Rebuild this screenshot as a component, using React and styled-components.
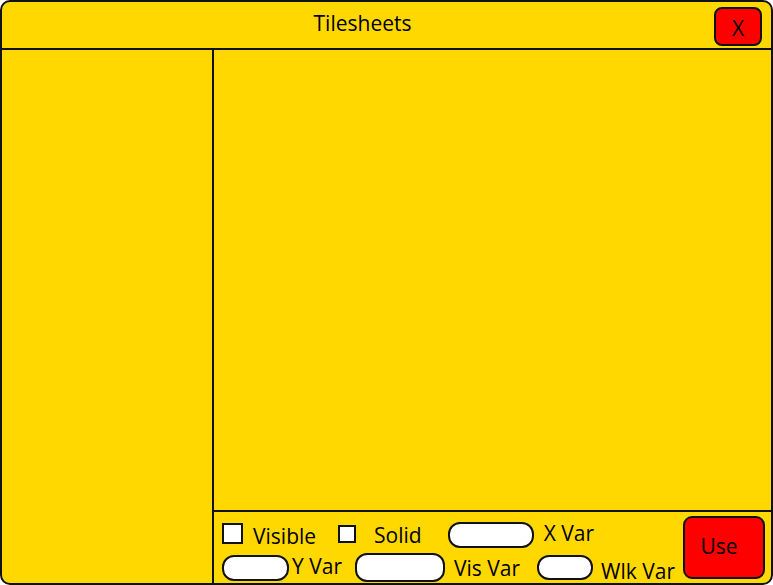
import React from "react";
import styled, { createGlobalStyle } from "styled-components";

const Global = createGlobalStyle`
  html, body { margin: 0; padding: 0; background: #ffffff; }
  * { box-sizing: border-box; }
  body { font-family: "Open Sans", "Noto Sans", sans-serif; }
`;

const Window = styled.div`
  width: 773px;
  height: 585px;
  background: #ffd800;
  border: 2px solid #111;
  border-radius: 10px;
  display: flex;
  flex-direction: column;
  overflow: hidden;
  color: #000;
`;

const Header = styled.div`
  height: 48px;
  flex: 0 0 48px;
  border-bottom: 2px solid #111;
  display: flex;
  align-items: center;
  justify-content: center;
  position: relative;
`;

const Title = styled.div`
  font-size: 21px;
  line-height: 1;
  margin-top: -4px;
  margin-right: 48px;
`;

const CloseButton = styled.button`
  position: absolute;
  right: 9px;
  top: 5px;
  width: 48px;
  height: 39px;
  background: #ff0000;
  border: 2px solid #111;
  border-radius: 8px;
  font-family: inherit;
  font-size: 21px;
  color: #000;
  padding: 0;
  padding-top: 2px;
  cursor: pointer;
`;

const Body = styled.div`
  flex: 1;
  display: flex;
  min-height: 0;
`;

const Sidebar = styled.div`
  width: 212px;
  flex: 0 0 212px;
  border-right: 2px solid #111;
`;

const Main = styled.div`
  flex: 1;
  display: flex;
  flex-direction: column;
`;

const Canvas = styled.div`
  flex: 1;
`;

const Controls = styled.div`
  height: 73px;
  flex: 0 0 73px;
  border-top: 2px solid #111;
  display: flex;
  padding-left: 8px;
`;

const Fields = styled.div`
  flex: 1;
  display: flex;
  flex-direction: column;
`;

const Row = styled.div`
  display: flex;
  align-items: flex-start;
  height: ${(p) => p.$h}px;
  margin-top: ${(p) => p.$mt || 0}px;
`;

const Check = styled.span`
  display: inline-block;
  width: ${(p) => p.$size}px;
  height: ${(p) => p.$size}px;
  border: 2px solid #111;
  background: #fff;
  margin-left: ${(p) => p.$ml || 0}px;
  margin-top: ${(p) => p.$mt || 0}px;
  flex: 0 0 auto;
`;

const Label = styled.span`
  font-size: 21px;
  line-height: 1;
  white-space: nowrap;
  margin-left: ${(p) => p.$ml || 0}px;
  margin-top: ${(p) => p.$mt || 0}px;
`;

const Pill = styled.span`
  display: inline-block;
  width: ${(p) => p.$w}px;
  height: ${(p) => p.$h || 26}px;
  border: 2px solid #111;
  border-radius: 12px;
  background: #fff;
  margin-left: ${(p) => p.$ml || 0}px;
  margin-top: ${(p) => p.$mt || 0}px;
  flex: 0 0 auto;
`;

const UseButton = styled.button`
  width: 82px;
  height: 63px;
  margin-top: 4px;
  margin-right: 6px;
  background: #ff0000;
  border: 2px solid #111;
  border-radius: 9px;
  font-family: inherit;
  font-size: 21px;
  color: #000;
  padding: 0 10px 4px 0;
  cursor: pointer;
`;

export default function App() {
  return (
    <>
      <Global />
      <Window>
        <Header>
          <Title>Tilesheets</Title>
          <CloseButton>X</CloseButton>
        </Header>
        <Body>
          <Sidebar />
          <Main>
            <Canvas />
            <Controls>
              <Fields>
                <Row $h={30} $mt={10}>
                  <Check $size={21} $mt={1} />
                  <Label $ml={10} $mt={4}>Visible</Label>
                  <Check $size={18} $ml={22} $mt={3} />
                  <Label $ml={18} $mt={3}>Solid</Label>
                  <Pill $w={86} $h={26} $ml={26} $mt={0} />
                  <Label $ml={10} $mt={1}>X Var</Label>
                </Row>
                <Row $h={30} $mt={0}>
                  <Pill $w={67} $h={26} $ml={0} $mt={3} />
                  <Label $ml={3} $mt={4}>Y Var</Label>
                  <Pill $w={90} $h={29} $ml={13} $mt={1} />
                  <Label $ml={9} $mt={6}>Vis Var</Label>
                  <Pill $w={56} $h={25} $ml={17} $mt={3} />
                  <Label $ml={8} $mt={9}>Wlk Var</Label>
                </Row>
              </Fields>
              <UseButton>Use</UseButton>
            </Controls>
          </Main>
        </Body>
      </Window>
    </>
  );
}
